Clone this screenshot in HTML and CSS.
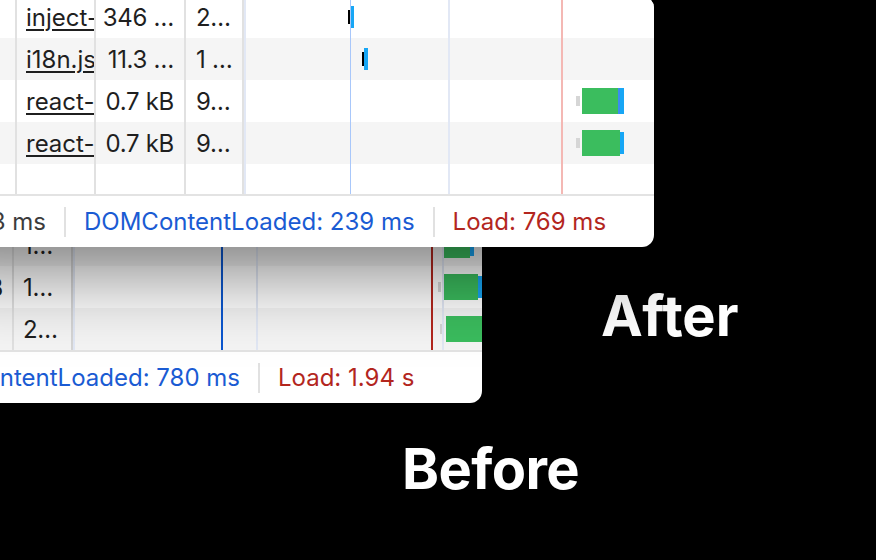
FILE: index.html
```html
<!DOCTYPE html>
<html lang="en">
<head>
<meta charset="utf-8">
<title>Network panel: before and after</title>
<link rel="stylesheet" href="styles.css">
</head>
<body>
<div class="canvas">

  <section class="win win-before">
    <div class="table">
      <div class="row">
        <div class="c c-size"></div>
        <div class="c c-time">1…</div>
        <div class="c c-wf">
          <span class="bar green" style="left:371px;width:26px"></span>
          <span class="bar blue" style="left:397px;width:4px"></span>
        </div>
      </div>
      <div class="row">
        <div class="c c-size">0.7 kB</div>
        <div class="c c-time">1…</div>
        <div class="c c-wf">
          <span class="bar queue" style="left:365px;width:3px"></span>
          <span class="bar green" style="left:371px;width:34px"></span>
          <span class="bar blue" style="left:405px;width:4px"></span>
        </div>
      </div>
      <div class="row">
        <div class="c c-size"></div>
        <div class="c c-time">2…</div>
        <div class="c c-wf">
          <span class="bar queue" style="left:367px;width:3px"></span>
          <span class="bar green" style="left:373px;width:40px"></span>
        </div>
      </div>
      <div class="lines">
        <i class="ln ln-grid" style="left:0"></i>
        <i class="ln ln-dcl-strong" style="left:148px"></i>
        <i class="ln ln-grid" style="left:183px"></i>
        <i class="ln ln-load-strong" style="left:358px"></i>
        <i class="ln ln-grid" style="left:369px"></i>
      </div>
    </div>
    <div class="foot">
      <div class="lead lead-before">
        <span class="f-text">Finish: 1.98 s</span>
        <span class="sep"></span>
        <span class="f-dcl">DOMContentLoaded: 780 ms</span>
      </div>
      <span class="sep"></span>
      <span class="f-load">Load: 1.94 s</span>
    </div>
  </section>

  <div class="label label-before">Before</div>

  <section class="win win-after">
    <div class="table">
      <div class="row">
        <div class="c c-first">chrome-extension://script</div>
        <div class="c c-name"><u>inject-script.js</u></div>
        <div class="c c-size">346 …</div>
        <div class="c c-time">2…</div>
        <div class="c c-wf">
          <span class="bar tick" style="left:104.3px;width:1.5px"></span>
          <span class="bar blue" style="left:107px;width:3px"></span>
        </div>
      </div>
      <div class="row">
        <div class="c c-first"></div>
        <div class="c c-name"><u>i18n.js</u></div>
        <div class="c c-size">11.3 …</div>
        <div class="c c-time">1 …</div>
        <div class="c c-wf">
          <span class="bar tick" style="left:118.3px;width:1.5px"></span>
          <span class="bar blue" style="left:120px;width:4px"></span>
        </div>
      </div>
      <div class="row">
        <div class="c c-first"></div>
        <div class="c c-name"><u>react-dom.js</u></div>
        <div class="c c-size">0.7 kB</div>
        <div class="c c-time">9…</div>
        <div class="c c-wf">
          <span class="bar queue" style="left:332px;width:4px"></span>
          <span class="bar green tall" style="left:338px;width:36px"></span>
          <span class="bar wait tall" style="left:374px;width:2px"></span>
          <span class="bar blue tall" style="left:376px;width:4px"></span>
        </div>
      </div>
      <div class="row">
        <div class="c c-first"></div>
        <div class="c c-name"><u>react-refresh.js</u></div>
        <div class="c c-size">0.7 kB</div>
        <div class="c c-time">9…</div>
        <div class="c c-wf">
          <span class="bar queue" style="left:332px;width:4px"></span>
          <span class="bar green" style="left:338px;width:38px"></span>
          <span class="bar blue" style="left:376px;width:4px"></span>
        </div>
      </div>
      <div class="row row-fill">
        <div class="c c-first"></div>
        <div class="c c-name"></div>
        <div class="c c-size"></div>
        <div class="c c-time"></div>
        <div class="c c-wf"></div>
      </div>
      <div class="lines">
        <i class="ln ln-grid" style="left:0"></i>
        <i class="ln ln-dcl" style="left:105.5px"></i>
        <i class="ln ln-grid" style="left:204px"></i>
        <i class="ln ln-load" style="left:317px"></i>
      </div>
    </div>
    <div class="foot">
      <div class="lead lead-after">
        <span class="f-text">Finish: 773 ms</span>
      </div>
      <span class="sep"></span>
      <span class="f-dcl">DOMContentLoaded: 239 ms</span>
      <span class="sep"></span>
      <span class="f-load">Load: 769 ms</span>
    </div>
  </section>

  <div class="label label-after">After</div>

</div>
</body>
</html>
```

FILE: styles.css
```css
html, body {
  margin: 0;
  padding: 0;
  background: #000;
}

body {
  width: 876px;
  height: 560px;
  overflow: hidden;
  font-family: Inter, "Liberation Sans", sans-serif;
}

.canvas {
  position: relative;
  width: 876px;
  height: 560px;
  overflow: hidden;
  background: #000;
}

/* ---------- windows ---------- */
.win {
  position: absolute;
  background: #fff;
  border-radius: 12px;
  overflow: hidden;
  display: flex;
  flex-direction: column;
  color: #1f1f1f;
  font-size: 24px;
}

.win-after {
  left: -84px;
  top: -4px;
  width: 738px;
  height: 251px;
  z-index: 2;
  box-shadow: 0 25px 80px rgba(0, 0, 0, 0.5);
}

.win-before {
  left: -300px;
  top: 224px;
  width: 782px;
  height: 179px;
  z-index: 1;
}

/* ---------- table ---------- */
.table {
  position: relative;
  display: flex;
  flex-direction: column;
}

.row {
  display: flex;
  height: 42px;
  background: #fff;
  letter-spacing: -0.3px;
}

.row:nth-child(even) {
  background: #f5f5f5;
}

.win-before .row:nth-child(odd) {
  background: #f5f5f5;
}

.win-before .row:nth-child(even) {
  background: #fff;
}

.row-fill {
  height: 30px;
}

.c {
  box-sizing: border-box;
  height: 100%;
  border-right: 2px solid #e1e1e1;
  display: flex;
  align-items: center;
  white-space: nowrap;
  overflow: hidden;
  flex: none;
}

.c-first {
  width: 101px;
  padding: 0 10px;
  display: block;
  line-height: 42px;
  text-overflow: ellipsis;
}

.c-name {
  width: 79px;
  padding-left: 9px;
  letter-spacing: 0;
}

.c-name u {
  text-decoration-thickness: 2px;
  text-underline-offset: 3px;
}

.c-size {
  width: 90px;
  padding: 0 10px 0 10px;
  justify-content: flex-end;
}

.c-time {
  width: 58px;
  padding: 0 10px;
}

.c-wf {
  position: relative;
  flex: 1;
  border-right: none;
}

.win-before .c-size {
  width: 314px;
  padding-right: 9px;
}

.win-before .c-time {
  width: 59px;
  padding-left: 9px;
  border-right-color: #d6d6d6;
}

/* ---------- waterfall ---------- */
.lines {
  position: absolute;
  top: 0;
  bottom: 0;
  pointer-events: none;
}

.win-after .lines {
  left: 328px;
}

.win-before .lines {
  left: 373px;
}

.ln {
  position: absolute;
  top: 0;
  bottom: 0;
  width: 2px;
}

.ln-grid {
  background: #e2e8f5;
}

.ln-dcl {
  width: 1.5px;
  background: #a8c7fa;
}

.ln-load {
  background: #f4b8b4;
}

.ln-dcl-strong {
  background: #0b57d0;
}

.ln-load-strong {
  background: #b3261e;
}

.bar {
  position: absolute;
  top: 10px;
  height: 22px;
}

.tick {
  top: 14px;
  height: 14px;
  background: #000;
}

.blue {
  background: #17a6f5;
}

.green {
  top: 8px;
  height: 26px;
  background: #3bbd5e;
}

.tall {
  top: 8px;
  height: 26px;
}

.wait {
  background: #3a8cf0;
}

.queue {
  top: 16px;
  height: 10px;
  background: #d6d6d6;
}

/* ---------- footer ---------- */
.foot {
  flex: 1;
  display: flex;
  align-items: center;
  border-top: 2px solid #e3e3e3;
  white-space: nowrap;
}

.lead {
  display: flex;
  align-items: center;
  justify-content: flex-end;
  flex: none;
}

.lead-after {
  width: 130px;
}

.lead-before {
  width: 540px;
}

.sep {
  flex: none;
  width: 2px;
  height: 30px;
  background: #e1e1e1;
  margin: 0 18px;
}

.f-text {
  color: #3c3c3c;
}

.f-dcl {
  color: #1a5bd3;
}

.f-load {
  color: #b3261e;
}

/* ---------- labels ---------- */
.label {
  position: absolute;
  color: #fff;
  font-family: Inter, "Liberation Sans", sans-serif;
  font-weight: 700;
  font-size: 56px;
  line-height: 56px;
}

.label-after {
  left: 601px;
  top: 288px;
}

.label-before {
  left: 402px;
  top: 441px;
  letter-spacing: -0.6px;
}
```
